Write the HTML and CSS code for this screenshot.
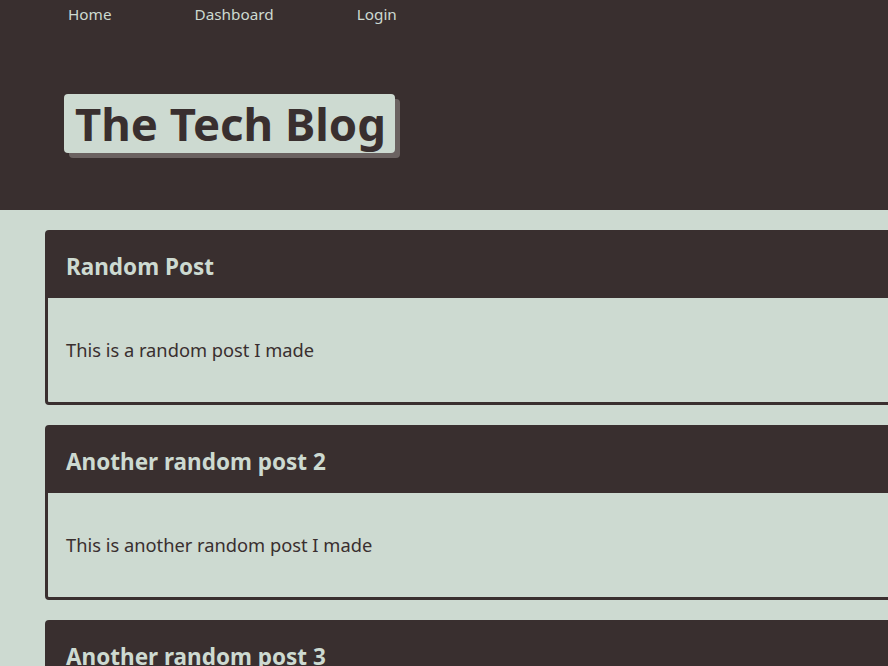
FILE: index.html
```html
<!DOCTYPE html>
<html lang="en">
<head>
<meta charset="utf-8">
<title>The Tech Blog</title>
<link rel="stylesheet" href="styles.css">
</head>
<body>
<header class="site-header">
  <nav class="nav">
    <a class="nav-link" href="#">Home</a>
    <a class="nav-link" href="#">Dashboard</a>
    <a class="nav-link" href="#">Login</a>
  </nav>
  <div class="brand">
    <h1 class="brand-title">The Tech Blog</h1>
  </div>
</header>
<main class="posts">
  <article class="post">
    <h2 class="post-title">Random Post</h2>
    <p class="post-body">This is a random post I made</p>
  </article>
  <article class="post">
    <h2 class="post-title">Another random post 2</h2>
    <p class="post-body">This is another random post I made</p>
  </article>
  <article class="post">
    <h2 class="post-title">Another random post 3</h2>
    <p class="post-body">This is another random post I made</p>
  </article>
</main>
</body>
</html>
```
FILE: styles.css
```css
html, body {
  margin: 0;
  padding: 0;
  overflow-x: hidden;
}
body {
  background: #cddad1;
  font-family: "Noto Sans", "Open Sans", sans-serif;
  color: #392f2f;
}
.site-header {
  background: #392f2f;
  height: 210px;
  box-sizing: border-box;
  padding-top: 2px;
}
.nav {
  display: flex;
  gap: 83px;
  padding-left: 68px;
}
.nav-link {
  color: #cddad1;
  text-decoration: none;
  font-size: 15.3px;
  line-height: 24px;
}
.brand {
  padding-left: 64px;
  padding-top: 68px;
  display: flex;
}
.brand-title {
  margin: 0;
  background: #cddad1;
  color: #392f2f;
  font-size: 45.5px;
  font-weight: 700;
  line-height: 59px;
  padding: 0 9px 0 11px;
  border-radius: 4px;
  box-shadow: 5px 5px 0 #6b6261;
}
.posts {
  padding: 20px 0 0 45px;
  display: flex;
  flex-direction: column;
  gap: 20px;
}
.post {
  width: 900px;
  border: 3px solid #392f2f;
  border-radius: 4px;
  background: #cddad1;
}
.post-title {
  margin: 0;
  background: #392f2f;
  color: #cddad1;
  font-size: 22.5px;
  font-weight: 700;
  height: 65px;
  line-height: 68px;
  padding-left: 18px;
}
.post-body {
  margin: 0;
  font-size: 18.3px;
  line-height: 24px;
  padding: 40px 18px 40px;
}
```
